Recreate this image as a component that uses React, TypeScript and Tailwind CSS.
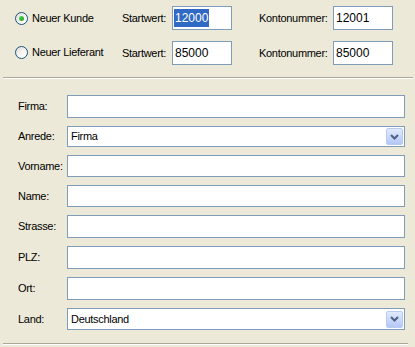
import React from 'react';

function Radio({ checked }: { checked?: boolean }) {
  return (
    <span className="relative inline-flex items-center justify-center w-[13px] h-[13px] rounded-full border border-[#1C5180] bg-gradient-to-br from-[#DCDCD7] via-[#F4F4F0] to-white">
      {checked && (
        <span className="w-[5px] h-[5px] rounded-full bg-gradient-to-br from-[#55D551] to-[#21A121]" />
      )}
    </span>
  );
}

function Field({ value, selected, className }: { value?: string; selected?: boolean; className?: string }) {
  return (
    <div className={`bg-white border border-[#7F9DB9] flex items-center pl-[1px] overflow-hidden whitespace-nowrap text-[12px] tracking-normal ${className ?? ''}`}>
      {selected ? <span className="bg-[#316AC5] text-white px-[1px]">{value}</span> : <span className="px-[1px]">{value}</span>}
    </div>
  );
}

function Combo({ value, className }: { value: string; className?: string }) {
  return (
    <div className={`bg-white border border-[#7F9DB9] flex items-center justify-between pl-[3px] pr-[1px] text-[11px] ${className ?? ''}`}>
      <span>{value}</span>
      <span className="w-[17px] h-[17px] rounded-[2px] border border-[#B9CBF3] bg-gradient-to-b from-[#E1EAFE] to-[#B4C8F6] flex items-center justify-center">
        <svg width="9" height="6" viewBox="0 0 9 6">
          <path d="M1 1 L4.5 4.5 L8 1" stroke="#4D6185" strokeWidth="2" fill="none" />
        </svg>
      </span>
    </div>
  );
}

const rows: { label: string; h: string; combo?: string }[] = [
  { label: 'Firma:', h: 'h-[23px]' },
  { label: 'Anrede:', h: 'h-[21px]', combo: 'Firma' },
  { label: 'Vorname:', h: 'h-[22px]' },
  { label: 'Name:', h: 'h-[22px]' },
  { label: 'Strasse:', h: 'h-[23px]' },
  { label: 'PLZ:', h: 'h-[23px]' },
  { label: 'Ort:', h: 'h-[23px]' },
  { label: 'Land:', h: 'h-[22px]', combo: 'Deutschland' },
];

export default function App() {
  return (
    <div className="w-[415px] h-[347px] bg-[#ECE9D8] text-black text-[11px] tracking-[-0.3px] font-['Tahoma','Liberation_Sans',sans-serif] overflow-hidden">
      <div className="pt-[6px]">
        <div className="flex items-center h-[24px]">
          <div className="w-[122px] flex items-center pl-[15px] gap-[4px] pt-[1px]">
            <Radio checked />
            <span>Neuer Kunde</span>
          </div>
          <span className="w-[50px]">Startwert:</span>
          <Field value="12000" selected className="w-[60px] h-[24px]" />
          <span className="w-[27px]" />
          <span className="w-[74px]">Kontonummer:</span>
          <Field value="12001" className="w-[60px] h-[24px]" />
        </div>
        <div className="flex items-center h-[24px] mt-[11px]">
          <div className="w-[122px] flex items-center pl-[15px] gap-[4px] -mt-[2px]">
            <Radio />
            <span>Neuer Lieferant</span>
          </div>
          <span className="w-[50px]">Startwert:</span>
          <Field value="85000" className="w-[60px] h-[24px]" />
          <span className="w-[27px]" />
          <span className="w-[74px]">Kontonummer:</span>
          <Field value="85000" className="w-[60px] h-[24px]" />
        </div>
      </div>

      <div className="mt-[12px] ml-[3px] w-[410px] border-t border-[#ACA899] border-b border-b-white" />

      <div className="pt-[16px] pl-[18px] flex flex-col gap-[8px]">
        {rows.map((r) => (
          <div key={r.label} className={`flex items-center ${r.h}`}>
            <span className="w-[49px]">{r.label}</span>
            {r.combo ? (
              <Combo value={r.combo} className={`w-[338px] ${r.h}`} />
            ) : (
              <Field className={`w-[338px] ${r.h}`} />
            )}
          </div>
        ))}
      </div>

      <div className="mt-[13px] ml-[3px] w-[405px] border-t border-[#ACA899] border-b border-b-white" />
    </div>
  );
}
